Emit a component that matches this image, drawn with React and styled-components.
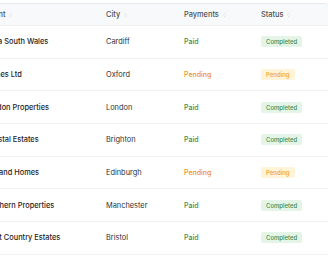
import React from 'react'
import styled, { createGlobalStyle } from 'styled-components'

const GlobalStyle = createGlobalStyle`
  html, body {
    margin: 0;
    padding: 0;
    background: #ffffff;
    overflow: hidden;
  }
  body {
    font-family: Inter, "Noto Sans", sans-serif;
  }
`

const rows = [
  { client: 'Nova South Wales', city: 'Cardiff', paid: true },
  { client: 'Barnes Ltd', city: 'Oxford', paid: false },
  { client: 'London Properties', city: 'London', paid: true },
  { client: 'Coastal Estates', city: 'Brighton', paid: true },
  { client: 'Midland Homes', city: 'Edinburgh', paid: false },
  { client: 'Northern Properties', city: 'Manchester', paid: true },
  { client: 'West Country Estates', city: 'Bristol', paid: true },
  { client: 'Riverside Lettings', city: 'Leeds', paid: true },
]

const SortIcon = () => (
  <SortMark viewBox="0 0 6 8" aria-hidden="true">
    <path d="M1 3 L3 1 L5 3 M1 5 L3 7 L5 5" fill="none" stroke="currentColor" strokeWidth="1.2" />
  </SortMark>
)

const App = () => {
  return (
    <Page>
      <GlobalStyle />
      <TableCard>
        <HeaderRow>
          <HeadCell $first>Client <SortIcon /></HeadCell>
          <HeadCell>City <SortIcon /></HeadCell>
          <HeadCell>Payments <SortIcon /></HeadCell>
          <HeadCell>Status <SortIcon /></HeadCell>
        </HeaderRow>
        {rows.map((r) => (
          <Row key={r.client}>
            <ClientCell>{r.client}</ClientCell>
            <Cell>{r.city}</Cell>
            <Cell>
              <Payment $paid={r.paid}>{r.paid ? 'Paid' : 'Pending'}</Payment>
            </Cell>
            <Cell>
              <Badge $paid={r.paid}>{r.paid ? 'Completed' : 'Pending'}</Badge>
            </Cell>
          </Row>
        ))}
      </TableCard>
    </Page>
  )
}

const Page = styled.div`
  width: 328px;
  height: 264px;
  overflow: hidden;
  padding-top: 3px;
  box-sizing: border-box;
`

const TableCard = styled.div`
  margin-left: -35px;
  width: 363px;
  border: 1px solid #e6e8eb;
  border-radius: 6px;
  background: #fff;
  overflow: hidden;
`

const columns = '128px 78px 77px 78px'

const HeaderRow = styled.div`
  display: grid;
  grid-template-columns: ${columns};
  height: 21px;
  align-items: center;
  background: #f8f9fa;
  border-bottom: 1px solid #eef0f2;
`

const HeadCell = styled.div`
  padding-left: ${(p) => (p.$first ? '19px' : '12px')};
  font-size: 7.4px;
  font-weight: 500;
  color: #4b4f55;
  display: flex;
  align-items: center;
  gap: 4px;
`

const SortMark = styled.svg`
  width: 3px;
  height: 4px;
  color: #cfd2d6;
`

const Row = styled.div`
  display: grid;
  grid-template-columns: ${columns};
  height: 32.7px;
  box-sizing: border-box;
  align-items: center;
  border-bottom: 1px solid #f1f2f4;
`

const Cell = styled.div`
  padding-left: 12px;
  font-size: 7.4px;
  color: #2f3237;
  white-space: nowrap;
`

const ClientCell = styled(Cell)`
  padding-left: 18px;
  font-weight: 500;
  color: #1f2226;
`

const Payment = styled.span`
  font-size: 7px;
  font-weight: 500;
  color: ${(p) => (p.$paid ? '#3c8a4a' : '#f0902a')};
`

const Badge = styled.span`
  display: inline-flex;
  align-items: center;
  height: 11px;
  padding: 0 5px;
  border-radius: 2px;
  font-size: 6px;
  font-weight: 500;
  color: ${(p) => (p.$paid ? '#3d8b4e' : '#eea135')};
  background: ${(p) => (p.$paid ? '#e4f5e8' : '#fff4d8')};
`

export default App
